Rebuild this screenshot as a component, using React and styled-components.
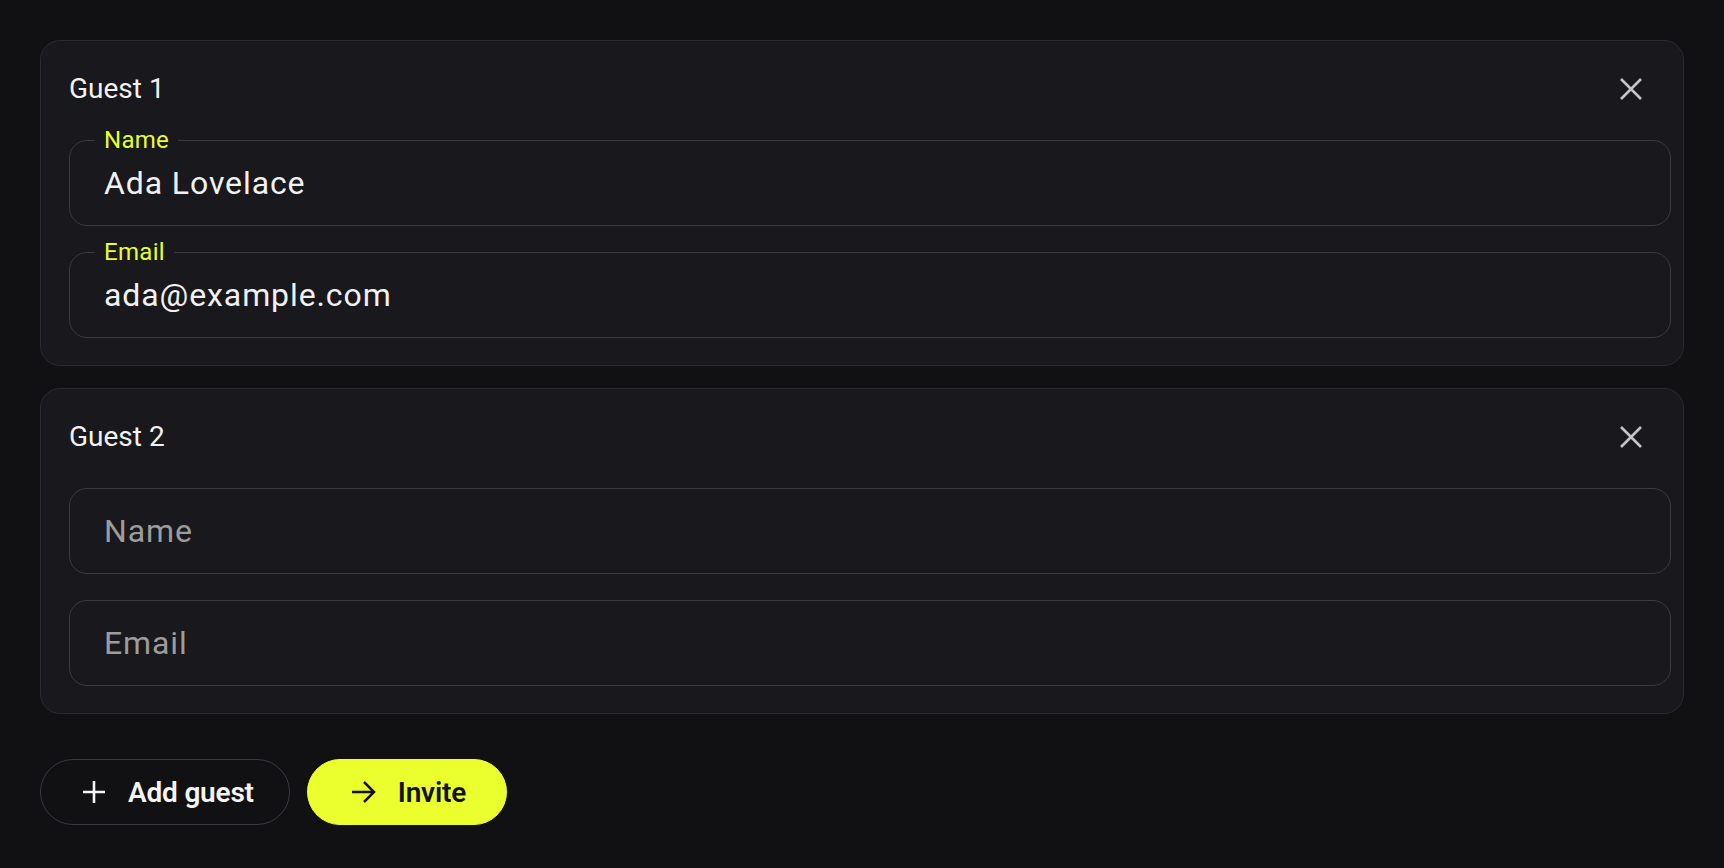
import React from 'react';
import styled, { createGlobalStyle } from 'styled-components';

const GlobalStyle = createGlobalStyle`
  html, body {
    margin: 0;
    padding: 0;
    background: #111114;
  }
  body {
    font-family: Roboto, "Noto Sans", "Liberation Sans", sans-serif;
    color: #f1f1f1;
  }
  * { box-sizing: border-box; }
`;

const Page = styled.div`
  min-height: 868px;
  padding: 40px;
  background: #111114;
`;

const CardList = styled.div`
  display: flex;
  flex-direction: column;
  gap: 22px;
`;

const Card = styled.section`
  background: #18181d;
  border: 1px solid #2a2a31;
  border-radius: 20px;
  padding: 24px 12px 27px 28px;
`;

const CardHeader = styled.div`
  display: flex;
  align-items: center;
  justify-content: space-between;
  height: 48px;
  margin-bottom: 27px;
  padding-right: 16px;
`;

const CardTitle = styled.h3`
  margin: 0;
  font-size: 28px;
  font-weight: 400;
  line-height: 48px;
  color: #f2f2f2;
`;

const CloseButton = styled.button`
  width: 48px;
  height: 48px;
  display: flex;
  align-items: center;
  justify-content: center;
  background: none;
  border: none;
  padding: 0;
  color: #c4c4c4;
  cursor: pointer;
`;

const Fields = styled.div`
  display: flex;
  flex-direction: column;
  gap: 26px;
`;

const Field = styled.div`
  position: relative;
  height: 86px;
  border: 1.5px solid #3b3b44;
  border-radius: 18px;
`;

// label that sits in the notch of the outline
const FloatLabel = styled.label`
  position: absolute;
  top: -15px;
  left: 25px;
  padding: 0 9px;
  background: #18181d;
  font-size: 24px;
  line-height: 28px;
  letter-spacing: 0.3px;
  color: #e8ff2a;
`;

const TextInput = styled.input`
  width: 100%;
  height: 100%;
  border: none;
  outline: none;
  background: transparent;
  padding: 0 34px;
  font-family: Roboto, "Noto Sans", "Liberation Sans", sans-serif;
  font-size: 32px;
  letter-spacing: 0.9px;
  color: #f1f1f1;

  &::placeholder {
    color: #9d9d99;
  }
`;

const Actions = styled.div`
  display: flex;
  gap: 17px;
  margin-top: 45px;
`;

const PillButton = styled.button`
  height: 66px;
  display: flex;
  align-items: center;
  gap: 22px;
  padding: 0 ${p => (p.$primary ? '40px' : '35px')} 0 ${p => (p.$primary ? '43px' : '41px')};
  border-radius: 33px;
  border: 1.5px solid ${p => (p.$primary ? '#ebff2f' : '#393941')};
  background: ${p => (p.$primary ? '#ebff2f' : 'transparent')};
  color: ${p => (p.$primary ? '#121212' : '#f4f4f4')};
  font-family: Roboto, "Noto Sans", "Liberation Sans", sans-serif;
  font-size: 28px;
  font-weight: 600;
  letter-spacing: -0.2px;
  cursor: pointer;
`;

const CloseIcon = () => (
  <svg width="22" height="22" viewBox="0 0 22 22" fill="none" stroke="currentColor" strokeWidth="2.6">
    <path d="M1 1L21 21M21 1L1 21" />
  </svg>
);

const PlusIcon = () => (
  <svg width="24" height="24" viewBox="0 0 24 24" fill="none" stroke="currentColor" strokeWidth="2.6">
    <path d="M1 12H23M12 1V23" />
  </svg>
);

const ArrowIcon = () => (
  <svg width="25" height="24" viewBox="0 0 25 24" fill="none" stroke="currentColor" strokeWidth="2.5">
    <path d="M1 12H23M13 2L23 12L13 22" />
  </svg>
);

const guests = [
  { id: 1, name: 'Ada Lovelace', email: 'ada@example.com' },
  { id: 2, name: '', email: '' },
];

function GuestField({ label, value }) {
  return (
    <Field>
      {value && <FloatLabel>{label}</FloatLabel>}
      <TextInput defaultValue={value} placeholder={value ? '' : label} />
    </Field>
  );
}

export default function App() {
  return (
    <Page>
      <GlobalStyle />
      <CardList>
        {guests.map(g => (
          <Card key={g.id}>
            <CardHeader>
              <CardTitle>Guest {g.id}</CardTitle>
              <CloseButton aria-label="Remove guest">
                <CloseIcon />
              </CloseButton>
            </CardHeader>
            <Fields>
              <GuestField label="Name" value={g.name} />
              <GuestField label="Email" value={g.email} />
            </Fields>
          </Card>
        ))}
      </CardList>
      <Actions>
        <PillButton>
          <PlusIcon />
          Add guest
        </PillButton>
        <PillButton $primary>
          <ArrowIcon />
          Invite
        </PillButton>
      </Actions>
    </Page>
  );
}
